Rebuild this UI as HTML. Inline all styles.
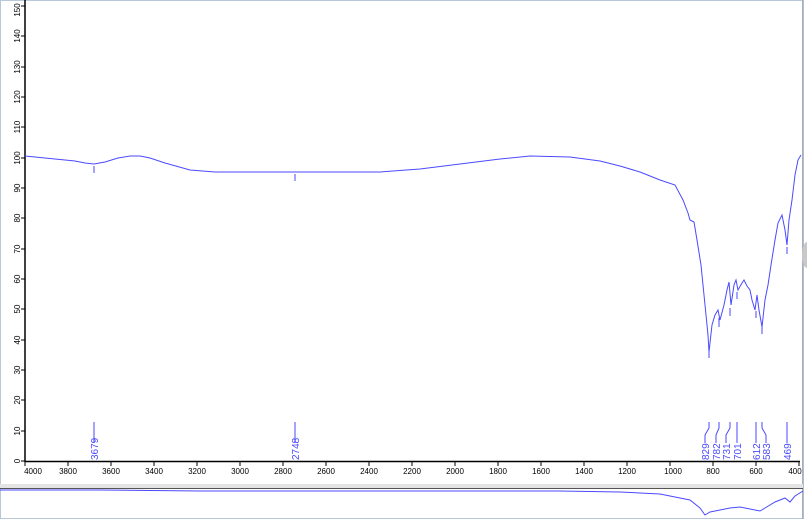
<!DOCTYPE html>
<html><head><style>
html,body{margin:0;padding:0;background:#fff;}
body{width:807px;height:519px;overflow:hidden;position:relative;font-family:"Liberation Sans",sans-serif;}
</style></head><body>
<svg width="807" height="519" xmlns="http://www.w3.org/2000/svg" style="position:absolute;left:0;top:0">
<rect x="0" y="0" width="807" height="519" fill="#fff"/>
<rect x="0.5" y="0.5" width="802" height="518" fill="none" stroke="#b8c8d8"/>
<line x1="803" y1="0" x2="803" y2="519" stroke="#9aa8b8" stroke-width="1.5"/>
<ellipse cx="807" cy="255" rx="5" ry="13" fill="#c8c8c8"/>
<!-- bottom panel separator -->
<rect x="0" y="484" width="803" height="4" fill="#e4e4e4"/>
<line x1="0" y1="488.5" x2="803" y2="488.5" stroke="#555" stroke-width="1"/>
<!-- axes -->
<line x1="25" y1="0" x2="25" y2="462" stroke="#000" stroke-width="1.5"/>
<line x1="25" y1="461.5" x2="800" y2="461.5" stroke="#000" stroke-width="1.5"/>
<g stroke="#000" stroke-width="1">
<line x1="21" y1="461" x2="25" y2="461"/><line x1="21" y1="431" x2="25" y2="431"/><line x1="21" y1="400" x2="25" y2="400"/><line x1="21" y1="370" x2="25" y2="370"/><line x1="21" y1="340" x2="25" y2="340"/><line x1="21" y1="309" x2="25" y2="309"/><line x1="21" y1="279" x2="25" y2="279"/><line x1="21" y1="249" x2="25" y2="249"/><line x1="21" y1="218" x2="25" y2="218"/><line x1="21" y1="188" x2="25" y2="188"/><line x1="21" y1="158" x2="25" y2="158"/><line x1="21" y1="127" x2="25" y2="127"/><line x1="21" y1="97" x2="25" y2="97"/><line x1="21" y1="67" x2="25" y2="67"/><line x1="21" y1="36" x2="25" y2="36"/><line x1="21" y1="6" x2="25" y2="6"/>
</g>
<g font-size="8" fill="#000" font-family="Liberation Sans,sans-serif" text-anchor="middle">
<text transform="translate(20,461) rotate(-90)">0</text>
<text transform="translate(20,431) rotate(-90)">10</text>
<text transform="translate(20,400) rotate(-90)">20</text>
<text transform="translate(20,370) rotate(-90)">30</text>
<text transform="translate(20,340) rotate(-90)">40</text>
<text transform="translate(20,309) rotate(-90)">50</text>
<text transform="translate(20,279) rotate(-90)">60</text>
<text transform="translate(20,249) rotate(-90)">70</text>
<text transform="translate(20,218) rotate(-90)">80</text>
<text transform="translate(20,188) rotate(-90)">90</text>
<text transform="translate(20,158) rotate(-90)">100</text>
<text transform="translate(20,127) rotate(-90)">110</text>
<text transform="translate(20,97) rotate(-90)">120</text>
<text transform="translate(20,67) rotate(-90)">130</text>
<text transform="translate(20,36) rotate(-90)">140</text>
<text transform="translate(20,10) rotate(-90)">150</text>
</g>
<g stroke="#000"><line x1="25" y1="462" x2="25" y2="466"/><line x1="68" y1="462" x2="68" y2="466"/><line x1="111" y1="462" x2="111" y2="466"/><line x1="154" y1="462" x2="154" y2="466"/><line x1="197" y1="462" x2="197" y2="466"/><line x1="240" y1="462" x2="240" y2="466"/><line x1="283" y1="462" x2="283" y2="466"/><line x1="326" y1="462" x2="326" y2="466"/><line x1="369" y1="462" x2="369" y2="466"/><line x1="412" y1="462" x2="412" y2="466"/><line x1="455" y1="462" x2="455" y2="466"/><line x1="498" y1="462" x2="498" y2="466"/><line x1="541" y1="462" x2="541" y2="466"/><line x1="584" y1="462" x2="584" y2="466"/><line x1="627" y1="462" x2="627" y2="466"/><line x1="670" y1="462" x2="670" y2="466"/><line x1="713" y1="462" x2="713" y2="466"/><line x1="756" y1="462" x2="756" y2="466"/><line x1="799" y1="462" x2="799" y2="466"/></g>
<g font-size="8" fill="#000" text-anchor="middle">
<text x="33" y="474">4000</text><text x="68" y="474">3800</text><text x="111" y="474">3600</text><text x="154" y="474">3400</text><text x="197" y="474">3200</text><text x="240" y="474">3000</text><text x="283" y="474">2800</text><text x="326" y="474">2600</text><text x="369" y="474">2400</text><text x="412" y="474">2200</text><text x="455" y="474">2000</text><text x="498" y="474">1800</text><text x="541" y="474">1600</text><text x="584" y="474">1400</text><text x="627" y="474">1200</text><text x="673" y="474">1000</text><text x="713" y="474">800</text><text x="756" y="474">600</text><text x="795" y="474">400</text>
</g>
<!-- spectrum -->
<polyline fill="none" stroke="#4a4aff" stroke-width="1" points="25,156 35,157 45,158 55,159 65,160 75,161 85,163 94,164 105,162 118,158 130,156 140,156 150,158 165,163 190,170 215,172 250,172 300,172 380,172 420,169 460,164 500,159 530,156 570,157 600,161 620,166 640,172 660,180 675,185 683,200 688,213 690,220 694,222 697,240 701,265 705,305 708,335 709,352 712,325 715,315 718,310 720,320 724,305 727,290 729,282 731,305 734,285 736,280 738,290 742,283 744,280 747,286 750,290 752,300 755,310 757,295 759,310 762,327 765,300 768,285 771,265 775,240 778,223 782,215 785,230 787,245 789,220 792,200 795,175 798,160 801,155"/>
<g stroke="#4a4aff" stroke-width="1">
<line x1="94" y1="166" x2="94" y2="173"/><line x1="295" y1="174" x2="295" y2="181"/>
<line x1="709" y1="350" x2="709" y2="358"/><line x1="719" y1="318" x2="719" y2="327"/><line x1="730" y1="308" x2="730" y2="316"/><line x1="737" y1="292" x2="737" y2="299"/><line x1="756" y1="311" x2="756" y2="318"/><line x1="762" y1="327" x2="762" y2="334"/><line x1="787" y1="247" x2="787" y2="254"/>
<line x1="94" y1="422" x2="94" y2="443"/><line x1="295" y1="422" x2="295" y2="443"/>
<polyline fill="none" points="709,422 709,428 705,435 705,443"/>
<polyline fill="none" points="719,422 719,428 716,435 716,443"/>
<polyline fill="none" points="730,422 730,428 726,435 726,443"/>
<line x1="737" y1="422" x2="737" y2="443"/>
<line x1="756" y1="422" x2="756" y2="443"/>
<polyline fill="none" points="762,422 762,428 766,435 766,443"/>
<line x1="787" y1="422" x2="787" y2="443"/>
</g>
<g font-size="10" fill="#4a4aff">
<text transform="translate(98,460) rotate(-90)">3679</text>
<text transform="translate(299,460) rotate(-90)">2748</text>
<text transform="translate(709,460) rotate(-90)">829</text>
<text transform="translate(720,460) rotate(-90)">782</text>
<text transform="translate(730,460) rotate(-90)">731</text>
<text transform="translate(741,460) rotate(-90)">701</text>
<text transform="translate(760,460) rotate(-90)">612</text>
<text transform="translate(770,460) rotate(-90)">583</text>
<text transform="translate(791,460) rotate(-90)">469</text>
</g>
<!-- bottom overview -->
<polyline fill="none" stroke="#4a4aff" stroke-width="1" points="0,490 100,490 200,491 400,491 500,491 560,491 620,492 660,494 690,500 700,508 705,515 710,512 720,510 730,508 740,507 750,509 760,511 765,508 775,502 785,498 790,502 795,496 803,491"/>
</svg>
</body></html>
